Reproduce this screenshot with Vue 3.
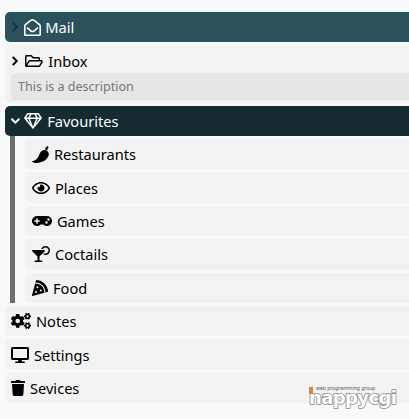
<script setup>
const P = {
  right: [320, 'M285.476 272.971L91.132 467.314c-9.373 9.373-24.569 9.373-33.941 0l-22.667-22.667c-9.357-9.357-9.375-24.522-.04-33.901L188.505 256 34.484 101.255c-9.335-9.379-9.317-24.544.04-33.901l22.667-22.667c9.373-9.373 24.569-9.373 33.941 0L285.475 239.03c9.373 9.372 9.373 24.568.001 33.941z'],
  down: [448, 'M207.029 381.476L12.686 187.132c-9.373-9.373-9.373-24.569 0-33.941l22.667-22.667c9.357-9.357 24.522-9.375 33.901-.04L224 284.505l154.745-154.021c9.379-9.335 24.544-9.317 33.901.04l22.667 22.667c9.373 9.373 9.373 24.569 0 33.941L240.971 381.476c-9.373 9.372-24.569 9.372-33.942 0z'],
  mail: [512, 'M494.586 164.516c-4.697-3.883-111.723-89.95-135.251-108.657C337.231 38.191 299.437 0 256 0c-43.205 0-80.636 37.717-103.335 55.859-24.463 19.45-131.07 105.195-135.15 108.549A48.004 48.004 0 0 0 0 201.485V464c0 26.51 21.49 48 48 48h416c26.51 0 48-21.49 48-48V201.509a48 48 0 0 0-17.414-36.993zM464 458a6 6 0 0 1-6 6H54a6 6 0 0 1-6-6V204.347c0-1.813.816-3.526 2.226-4.665 15.87-12.814 108.793-87.554 132.364-106.293C200.755 78.88 232.398 48 256 48c23.693 0 55.857 31.369 73.41 45.389 23.573 18.741 116.503 93.493 132.366 106.316a5.99 5.99 0 0 1 2.224 4.663V458zm-31.991-187.704c4.249 5.159 3.465 12.795-1.745 16.981-28.975 23.283-59.274 47.597-70.929 56.863C336.636 362.283 299.205 400 256 400c-43.452 0-81.287-38.237-103.335-55.86-11.279-8.967-41.744-33.413-70.927-56.865-5.21-4.187-5.993-11.822-1.745-16.981l15.258-18.528c4.178-5.073 11.657-5.843 16.779-1.726 28.618 23.001 58.566 47.035 70.56 56.571C200.143 320.631 232.307 352 256 352c23.602 0 55.246-30.88 73.41-45.389 11.994-9.535 41.944-33.57 70.563-56.568 5.122-4.116 12.601-3.346 16.778 1.727l15.258 18.526z'],
  folder: [576, 'M527.943 224H480v-48c0-26.51-21.49-48-48-48H272l-64-64H48C21.49 64 0 85.49 0 112v288c0 26.51 21.49 48 48 48h400a48.001 48.001 0 0 0 41.163-23.304l79.913-128C578.268 284.126 560.22 224 527.943 224zM54 112h134.118l64 64H426a6 6 0 0 1 6 6v42H152a48 48 0 0 0-41.098 23.243L48 351.089V118a6 6 0 0 1 6-6zm394 288H72l77.199-128H528l-80 128z'],
  gem: [576, 'M464 0H112c-4 0-7.8 2-10 5.4L2 152.6c-2.9 4.4-2.6 10.2.7 14.2l276 340.8c4.8 5.9 13.8 5.9 18.6 0l276-340.8c3.3-4.1 3.6-9.8.7-14.2L474.1 5.4C471.8 2 468.1 0 464 0zm-19.3 48l63.3 96h-68.4l-51.7-96h56.8zm-202.1 0h90.7l51.7 96H191l51.6-96zm-111.3 0h56.8l-51.7 96H68l63.3-96zm-43 144h51.4L208 352 88.3 192zm102.9 0h193.6L288 435.3 191.2 192zM368 352l68.2-160h51.4L368 352z'],
  pepper: [512, 'M290 150C370 95 480 130 505 225C520 340 390 500 150 510C85 512 20 505 0 450C70 455 160 400 205 300C235 230 250 180 290 150ZM390 105C395 65 420 20 470 0L500 50C470 65 460 95 462 140C440 120 415 110 390 105Z'],
  eye: [576, 'M288 144a110.94 110.94 0 0 0-31.24 5 55.4 55.4 0 0 1 7.24 27 56 56 0 0 1-56 56 55.4 55.4 0 0 1-27-7.24A111.71 111.71 0 1 0 288 144zm284.52 97.4C518.29 135.59 410.93 64 288 64S57.68 135.64 3.48 241.41a32.35 32.35 0 0 0 0 29.19C57.71 376.41 165.07 448 288 448s230.32-71.64 284.52-177.41a32.35 32.35 0 0 0 0-29.19zM288 400c-98.65 0-189.09-55-237.93-144C98.91 167 189.34 112 288 112s189.09 55 237.93 144C477.1 345 386.66 400 288 400z'],
  gamepad: [640, 'M480.07 96H160a160 160 0 1 0 114.24 272h91.52A160 160 0 1 0 480.07 96zM248 268a12 12 0 0 1-12 12h-52v52a12 12 0 0 1-12 12h-24a12 12 0 0 1-12-12v-52H84a12 12 0 0 1-12-12v-24a12 12 0 0 1 12-12h52v-52a12 12 0 0 1 12-12h24a12 12 0 0 1 12 12v52h52a12 12 0 0 1 12 12zm216 76a40 40 0 1 1 40-40 40 40 0 0 1-40 40zm64-96a40 40 0 1 1 40-40 40 40 0 0 1-40 40z'],
  cocktail: [576, 'M296 464h-56V338.78l168.74-168.73c15.52-15.52 4.53-42.05-17.42-42.05H24.68c-21.95 0-32.94 26.53-17.42 42.05L176 338.78V464h-56c-22.09 0-40 17.91-40 40 0 4.42 3.58 8 8 8h240c4.42 0 8-3.58 8-8 0-22.09-17.91-40-40-40zM432 0c-62.61 0-115.35 40.2-135.18 96h52.54c16.65-28.55 47.27-48 82.64-48 52.93 0 96 43.06 96 96s-43.07 96-96 96c-14.04 0-27.29-3.2-39.32-8.64l-35.26 35.26C379.23 279.92 404.59 288 432 288c79.53 0 144-64.47 144-144S511.53 0 432 0z'],
  pizza: [512, 'M158.87.15c-16.16-1.52-31.2 8.42-35.33 24.12l-14.81 56.27c187.62 5.49 314.54 130.61 322.48 317l56.94-15.78c15.72-4.36 25.49-19.68 23.62-35.9C490.89 165.08 340.78 17.32 158.87.15zm-58.47 112L.55 491.64a16.21 16.21 0 0 0 20 19.75l379-105.1c-4.27-174.89-123.08-292.14-299.15-294.1zM128 416a32 32 0 1 1 32-32 32 32 0 0 1-32 32zm48-152a32 32 0 1 1 32-32 32 32 0 0 1-32 32zm104 104a32 32 0 1 1 32-32 32 32 0 0 1-32 32z'],
  cogs: [640, 'M512.1 191l-8.2 14.3c-3 5.3-9.4 7.5-15.1 5.4-11.8-4.4-22.6-10.7-32.1-18.6-4.6-3.8-5.8-10.5-2.8-15.7l8.2-14.3c-6.9-8-12.3-17.3-15.9-27.4h-16.5c-6 0-11.2-4.3-12.2-10.3-2-12-2.1-24.6 0-37.1 1-6 6.2-10.4 12.2-10.4h16.5c3.6-10.1 9-19.4 15.9-27.4l-8.2-14.3c-3-5.2-1.9-11.9 2.8-15.7 9.5-7.9 20.4-14.2 32.1-18.6 5.7-2.1 12.1.1 15.1 5.4l8.2 14.3c10.5-1.9 21.2-1.9 31.7 0L552 6.3c3-5.3 9.4-7.5 15.1-5.4 11.8 4.4 22.6 10.7 32.1 18.6 4.6 3.8 5.8 10.5 2.8 15.7l-8.2 14.3c6.9 8 12.3 17.3 15.9 27.4h16.5c6 0 11.2 4.3 12.2 10.3 2 12 2.1 24.6 0 37.1-1 6-6.2 10.4-12.2 10.4h-16.5c-3.6 10.1-9 19.4-15.9 27.4l8.2 14.3c3 5.2 1.9 11.9-2.8 15.7-9.5 7.9-20.4 14.2-32.1 18.6-5.7 2.1-12.1-.1-15.1-5.4l-8.2-14.3c-10.4 1.9-21.2 1.9-31.7 0zm-10.5-58.8c38.5 29.6 82.4-14.3 52.8-52.8-38.5-29.7-82.4 14.3-52.8 52.8zM386.3 286.1l33.7 16.8c10.1 5.8 14.5 18.1 10.5 29.1-8.9 24.2-26.4 46.4-42.6 65.8-7.4 8.9-20.2 11.1-30.3 5.3l-29.1-16.8c-16 13.7-34.6 24.6-54.9 31.7v33.6c0 11.6-8.3 21.6-19.7 23.6-24.6 4.2-50.4 4.4-75.9 0-11.5-2-20-11.9-20-23.6V418c-20.3-7.2-38.9-18-54.9-31.7L74 403c-10 5.8-22.9 3.6-30.3-5.3-16.2-19.4-33.3-41.6-42.2-65.7-4-10.9.4-23.2 10.5-29.1l33.3-16.8c-3.9-20.9-3.9-42.4 0-63.4L12 205.8c-10.1-5.8-14.6-18.1-10.5-29 8.9-24.2 26-46.4 42.2-65.8 7.4-8.9 20.2-11.1 30.3-5.3l29.1 16.8c16-13.7 34.6-24.6 54.9-31.7V57.1c0-11.5 8.2-21.5 19.6-23.5 24.6-4.2 50.5-4.4 76-.1 11.5 2 20 11.9 20 23.6v33.6c20.3 7.2 38.9 18 54.9 31.7l29.1-16.8c10-5.8 22.9-3.6 30.3 5.3 16.2 19.4 33.2 41.6 42.1 65.8 4 10.9.1 23.2-10 29.1l-33.7 16.8c3.9 21 3.9 42.5 0 63.5zm-117.6 21.1c59.2-77-28.7-164.9-105.7-105.7-59.2 77 28.7 164.9 105.7 105.7zm243.4 182.7l-8.2 14.3c-3 5.3-9.4 7.5-15.1 5.4-11.8-4.4-22.6-10.7-32.1-18.6-4.6-3.8-5.8-10.5-2.8-15.7l8.2-14.3c-6.9-8-12.3-17.3-15.9-27.4h-16.5c-6 0-11.2-4.3-12.2-10.3-2-12-2.1-24.6 0-37.1 1-6 6.2-10.4 12.2-10.4h16.5c3.6-10.1 9-19.4 15.9-27.4l-8.2-14.3c-3-5.2-1.9-11.9 2.8-15.7 9.5-7.9 20.4-14.2 32.1-18.6 5.7-2.1 12.1.1 15.1 5.4l8.2 14.3c10.5-1.9 21.2-1.9 31.7 0l8.2-14.3c3-5.3 9.4-7.5 15.1-5.4 11.8 4.4 22.6 10.7 32.1 18.6 4.6 3.8 5.8 10.5 2.8 15.7l-8.2 14.3c6.9 8 12.3 17.3 15.9 27.4h16.5c6 0 11.2 4.3 12.2 10.3 2 12 2.1 24.6 0 37.1-1 6-6.2 10.4-12.2 10.4h-16.5c-3.6 10.1-9 19.4-15.9 27.4l8.2 14.3c3 5.2 1.9 11.9-2.8 15.7-9.5 7.9-20.4 14.2-32.1 18.6-5.7 2.1-12.1-.1-15.1-5.4l-8.2-14.3c-10.4 1.9-21.2 1.9-31.7 0zM501.6 431c38.5 29.6 82.4-14.3 52.8-52.8-38.5-29.6-82.4 14.3-52.8 52.8z'],
  desktop: [576, 'M528 0H48C21.5 0 0 21.5 0 48v320c0 26.5 21.5 48 48 48h192l-16 48h-72c-13.3 0-24 10.7-24 24s10.7 24 24 24h272c13.3 0 24-10.7 24-24s-10.7-24-24-24h-72l-16-48h192c26.5 0 48-21.5 48-48V48c0-26.5-21.5-48-48-48zm-16 352H64V64h448v288z'],
  trash: [448, 'M432 32H312l-9.4-18.7A24 24 0 0 0 281.1 0H166.8a23.72 23.72 0 0 0-21.4 13.3L136 32H16A16 16 0 0 0 0 48v32a16 16 0 0 0 16 16h416a16 16 0 0 0 16-16V48a16 16 0 0 0-16-16zM53.2 467a48 48 0 0 0 47.9 45h245.8a48 48 0 0 0 47.9-45L416 128H32z']
}
const icon = (name, h = 16) => ({ vb: `0 0 ${P[name][0]} 512`, d: P[name][1], w: (P[name][0] / 512) * h, h })
const subItems = [
  { label: 'Restaurants', i: icon('pepper', 17) },
  { label: 'Places', i: icon('eye') },
  { label: 'Games', i: icon('gamepad') },
  { label: 'Coctails', i: icon('cocktail') },
  { label: 'Food', i: icon('pizza') }
]
const bottomItems = [
  { label: 'Notes', i: icon('cogs') },
  { label: 'Settings', i: icon('desktop') },
  { label: 'Sevices', i: icon('trash') }
]
const ic = { right: icon('right', 10), down: icon('down', 10), mail: icon('mail', 17), folder: icon('folder'), gem: icon('gem') }
</script>

<template>
  <div class="page">
    <div class="row head mail">
      <svg class="chev dim" :viewBox="ic.right.vb" :width="ic.right.w" :height="ic.right.h"><path :d="ic.right.d" /></svg>
      <svg :viewBox="ic.mail.vb" :width="ic.mail.w" :height="ic.mail.h"><path :d="ic.mail.d" /></svg>
      <span>Mail</span>
    </div>

    <div class="card">
      <div class="card-title">
        <svg class="chev" :viewBox="ic.right.vb" :width="ic.right.w" :height="ic.right.h"><path :d="ic.right.d" /></svg>
        <svg :viewBox="ic.folder.vb" :width="ic.folder.w" :height="ic.folder.h"><path :d="ic.folder.d" /></svg>
        <span>Inbox</span>
      </div>
      <div class="desc">This is a description</div>
    </div>

    <div class="row head fav">
      <svg class="chev-down" :viewBox="ic.down.vb" :width="ic.down.w" :height="ic.down.h"><path :d="ic.down.d" /></svg>
      <svg :viewBox="ic.gem.vb" :width="ic.gem.w" :height="ic.gem.h"><path :d="ic.gem.d" /></svg>
      <span>Favourites</span>
    </div>

    <div class="subtree">
      <div v-for="s in subItems" :key="s.label" class="row sub">
        <svg :viewBox="s.i.vb" :width="s.i.w" :height="s.i.h"><path :d="s.i.d" /></svg>
        <span>{{ s.label }}</span>
      </div>
    </div>

    <div v-for="b in bottomItems" :key="b.label" class="row plain">
      <svg :viewBox="b.i.vb" :width="b.i.w" :height="b.i.h"><path :d="b.i.d" /></svg>
      <span>{{ b.label }}</span>
    </div>

    <div class="logo">
      <div class="tag"><i></i><span>web programming group</span></div>
      <div class="word">nappycgi</div>
    </div>
  </div>
</template>

<style scoped>
.page {
  position: relative;
  box-sizing: border-box;
  height: 419px;
  overflow: hidden;
  padding: 12px 0 0 5px;
  display: flex;
  flex-direction: column;
  gap: 3px;
  background: #f8f9fb;
  color: #000;
  font-family: "Noto Sans", "Open Sans", sans-serif;
  font-size: 14.6px;
}
svg { fill: currentColor; flex: none; display: block; }
.row {
  height: 30.4px;
  flex: none;
  display: flex;
  align-items: center;
  gap: 5px;
  border-radius: 5px 0 0 5px;
}
.head { color: #fff; padding-left: 7px; height: 30px; }
.mail { background: #2b525c; gap: 4px; }
.fav { background: #142b32; }
.chev { margin-right: 2px; stroke: currentColor; stroke-width: 30; }
.chev-down { margin: 0 -0.6px 0 -1px; stroke: currentColor; stroke-width: 30; }
.dim { color: #17343b; }
.card {
  background: #f2f2f2;
  border-radius: 5px 0 0 5px;
  height: 58px;
  flex: none;
  box-sizing: border-box;
  padding: 0 0 3px 6px;
  display: flex;
  flex-direction: column;
}
.card-title {
  height: 28px;
  box-sizing: border-box;
  padding: 3px 0 0 1px;
  flex: none;
  display: flex;
  align-items: center;
  gap: 5px;
}
.desc {
  flex: 1;
  box-sizing: border-box;
  background: #e6e6e6;
  border-bottom: 1px solid #dcdcdc;
  border-radius: 4px 0 0 4px;
  padding-left: 7px;
  display: flex;
  align-items: center;
  font-size: 12.5px;
  color: #777;
}
.subtree {
  flex: none;
  margin: -3px 0 0 5px;
  border-left: 5px solid #6e6e6e;
  padding: 3px 0 0 10px;
  display: flex;
  flex-direction: column;
  gap: 3px;
}
.sub { background: #f2f2f2; padding-left: 7px; }
.plain { background: #f2f2f2; padding-left: 6px; }
.logo {
  position: absolute;
  left: 309px;
  top: 384px;
  width: 92px;
}
.tag {
  display: flex;
  align-items: center;
  gap: 3px;
  height: 8px;
  line-height: 8px;
  font-size: 5px;
  color: #555;
}
.tag i { width: 4px; height: 7px; margin-top: 4px; background: #d8863f; flex: none; }
.word {
  margin-top: -2px;
  font-family: "DejaVu Sans", sans-serif;
  font-weight: 700;
  font-size: 18px;
  line-height: 15px;
  color: #fff;
  -webkit-text-stroke: 1.6px #8a8a8a;
  paint-order: stroke fill;
  letter-spacing: -0.6px;
}
</style>

<style>
html, body { background: #f8f9fb; }
</style>
